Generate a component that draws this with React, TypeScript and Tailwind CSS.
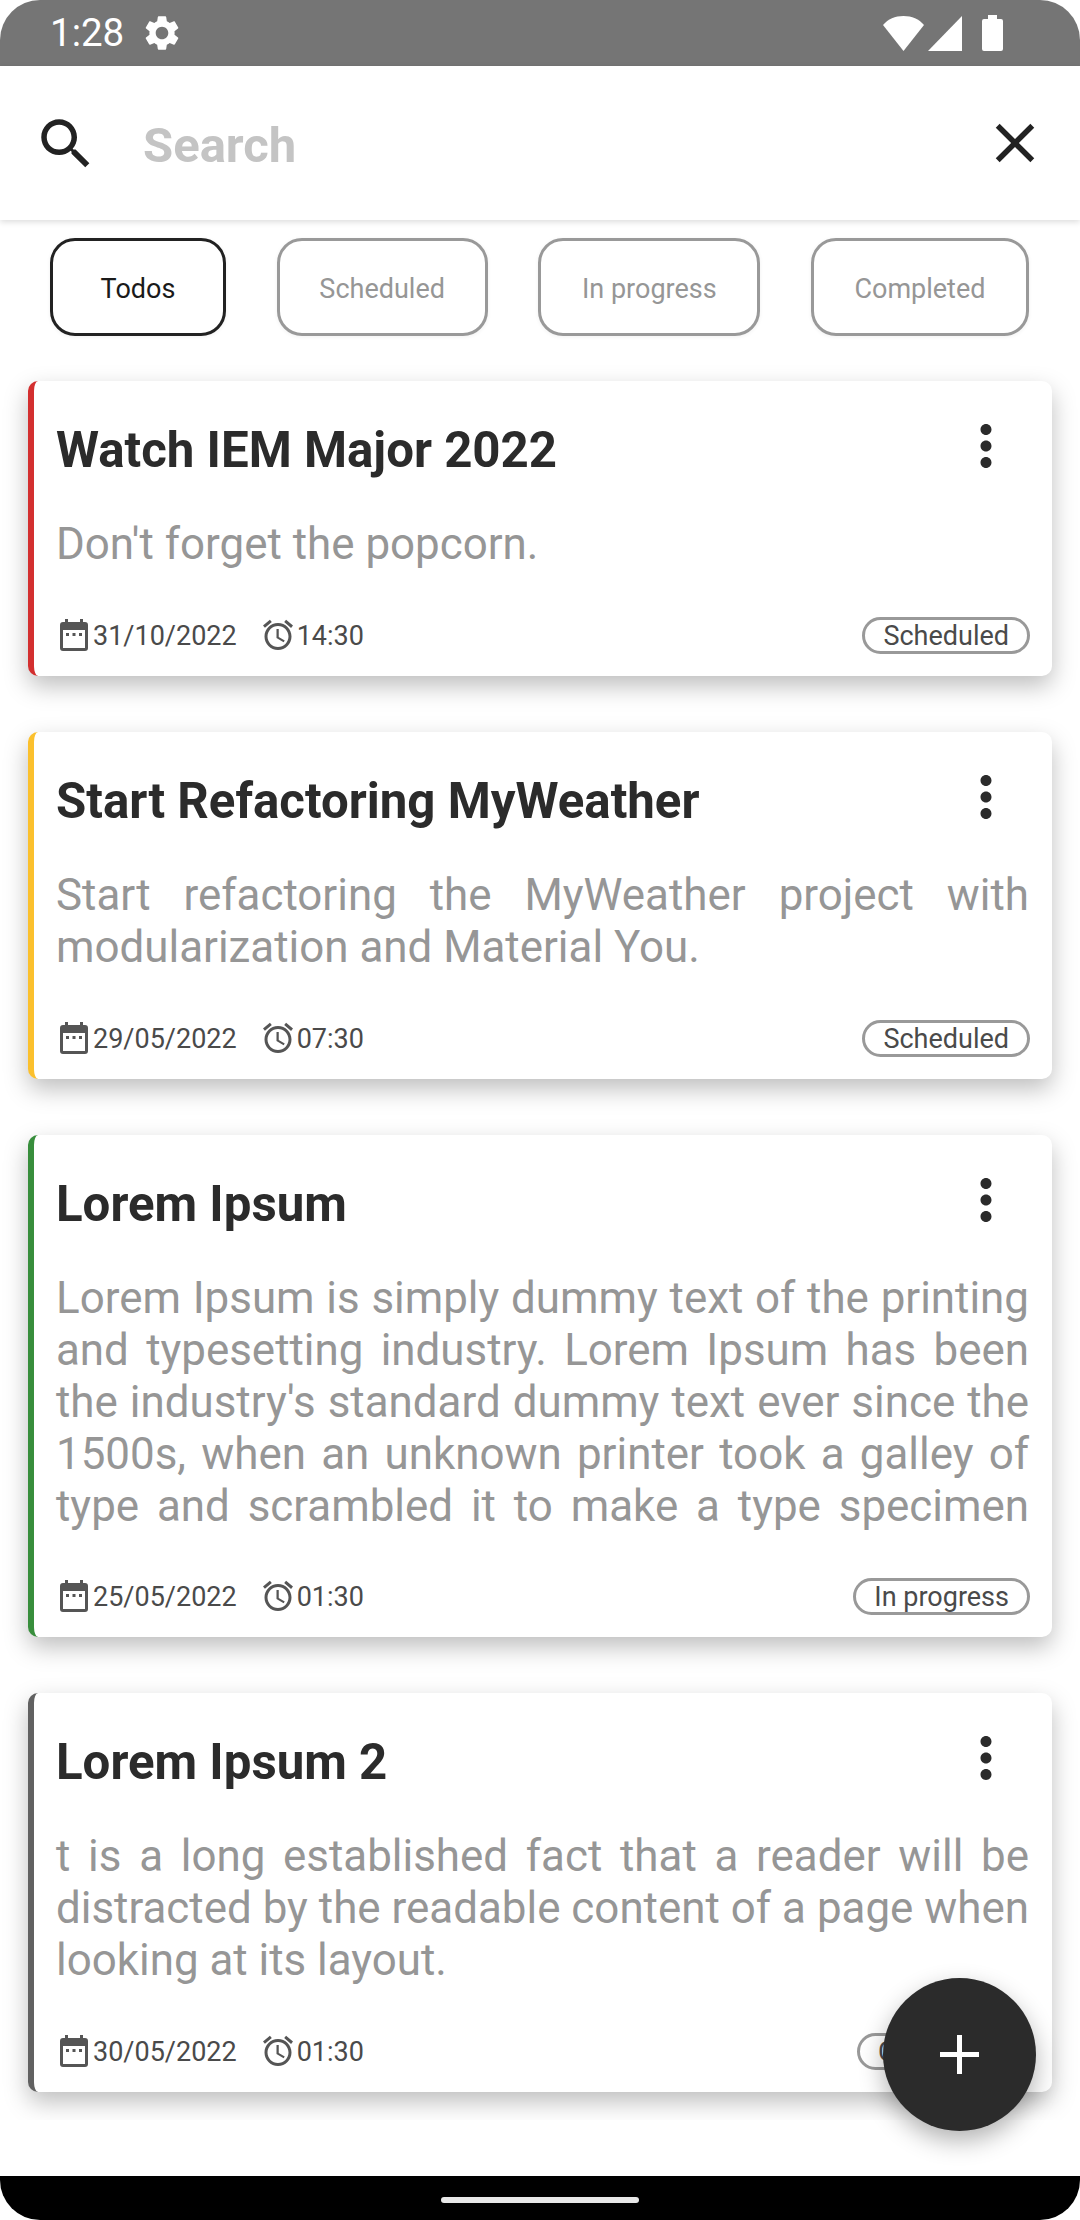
/**
 * Todo list screen
 */

const ICONS = {
  search:
    'M15.5 14h-.79l-.28-.27C15.41 12.59 16 11.11 16 9.5 16 5.91 13.09 3 9.5 3S3 5.91 3 9.5 5.91 16 9.5 16c1.61 0 3.09-.59 4.23-1.57l.27.28v.79l5 4.99L20.49 19l-4.99-5zm-6 0C7.01 14 5 11.99 5 9.5S7.01 5 9.5 5 14 7.01 14 9.5 11.99 14 9.5 14z',
  close:
    'M19 6.41 17.59 5 12 10.59 6.41 5 5 6.41 10.59 12 5 17.59 6.41 19 12 13.41 17.59 19 19 17.59 13.41 12z',
  more:
    'M12 8c1.1 0 2-.9 2-2s-.9-2-2-2-2 .9-2 2 .9 2 2 2zm0 2c-1.1 0-2 .9-2 2s.9 2 2 2 2-.9 2-2-.9-2-2-2zm0 6c-1.1 0-2 .9-2 2s.9 2 2 2 2-.9 2-2-.9-2-2-2z',
  alarm:
    'M22 5.72l-4.6-3.86-1.29 1.53 4.6 3.86L22 5.72zM7.88 3.39L6.6 1.86 2 5.71l1.29 1.53 4.59-3.85zM12.5 8H11v6l4.75 2.85.75-1.23-4-2.37V8zM12 4c-4.97 0-9 4.03-9 9s4.02 9 9 9c4.97 0 9-4.03 9-9s-4.03-9-9-9zm0 16c-3.87 0-7-3.13-7-7s3.13-7 7-7 7 3.13 7 7-3.13 7-7 7z',
  settings:
    'M19.14 12.94c.04-.3.06-.61.06-.94 0-.32-.02-.64-.07-.94l2.03-1.58c.18-.14.23-.41.12-.61l-1.92-3.32c-.12-.22-.37-.29-.59-.22l-2.39.96c-.5-.38-1.03-.7-1.62-.94l-.36-2.54c-.04-.24-.24-.41-.48-.41h-3.84c-.24 0-.43.17-.47.41l-.36 2.54c-.59.24-1.13.57-1.62.94l-2.39-.96c-.22-.08-.47 0-.59.22L2.74 8.87c-.12.21-.08.47.12.61l2.03 1.58c-.05.3-.09.63-.09.94s.02.64.07.94l-2.03 1.58c-.18.14-.23.41-.12.61l1.92 3.32c.12.22.37.29.59.22l2.39-.96c.5.38 1.03.7 1.62.94l.36 2.54c.05.24.24.41.48.41h3.84c.24 0 .44-.17.47-.41l.36-2.54c.59-.24 1.13-.56 1.62-.94l2.39.96c.22.08.47 0 .59-.22l1.92-3.32c.12-.22.07-.47-.12-.61l-2.01-1.58zM12 15.6c-1.98 0-3.6-1.62-3.6-3.6s1.62-3.6 3.6-3.6 3.6 1.62 3.6 3.6-1.62 3.6-3.6 3.6z',
};

function Icon({ d, className }: { d: string; className: string }) {
  return (
    <svg viewBox="0 0 24 24" fill="currentColor" className={className}>
      <path d={d} />
    </svg>
  );
}

function CalendarIcon() {
  return (
    <svg viewBox="0 0 28 32" className="w-[28px] h-[32px] shrink-0 text-[#555555]" fill="currentColor">
      <path d="M5 0h3v3h12V0h3v3h2a3 3 0 0 1 3 3v23a3 3 0 0 1-3 3H3a3 3 0 0 1-3-3V6a3 3 0 0 1 3-3h2zM3 11v18h22V11z" />
      <rect x="6" y="14" width="3" height="3" />
      <rect x="12.5" y="14" width="3" height="3" />
      <rect x="19" y="14" width="3" height="3" />
    </svg>
  );
}

const TABS = [
  { label: 'Todos', width: 'w-[176px]', active: true },
  { label: 'Scheduled', width: 'w-[211px]', active: false },
  { label: 'In progress', width: 'w-[222px]', active: false },
  { label: 'Completed', width: 'w-[218px]', active: false },
];

const TODOS = [
  {
    title: 'Watch IEM Major 2022',
    body: "Don't forget the popcorn.",
    date: '31/10/2022',
    time: '14:30',
    status: 'Scheduled',
    border: 'border-l-[#d32f2f]',
    bodyClass: 'h-[52px]',
  },
  {
    title: 'Start Refactoring MyWeather',
    body: 'Start refactoring the MyWeather project with modularization and Material You.',
    date: '29/05/2022',
    time: '07:30',
    status: 'Scheduled',
    border: 'border-l-[#fbc02d]',
    bodyClass: 'h-[104px]',
  },
  {
    title: 'Lorem Ipsum',
    // cut at five lines in the app, so the last line stays justified
    body: "Lorem Ipsum is simply dummy text of the printing and typesetting industry. Lorem Ipsum has been the industry's standard dummy text ever since the 1500s, when an unknown printer took a galley of type and scrambled it to make a type specimen",
    date: '25/05/2022',
    time: '01:30',
    status: 'In progress',
    border: 'border-l-[#388e3c]',
    bodyClass: 'h-[259px] [text-align-last:justify]',
  },
  {
    title: 'Lorem Ipsum 2',
    body: 't is a long established fact that a reader will be distracted by the readable content of a page when looking at its layout.',
    date: '30/05/2022',
    time: '01:30',
    status: 'Completed',
    border: 'border-l-[#616161]',
    bodyClass: 'h-[156px]',
  },
];

function StatusBar() {
  return (
    <div className="h-[66px] shrink-0 bg-[#757575] flex items-center pl-[50px] pr-[77px] text-white">
      <span className="text-[38.5px] leading-none">1:28</span>
      <Icon d={ICONS.settings} className="w-[42px] h-[42px] ml-[17px]" />
      <div className="ml-auto flex items-center">
        <svg viewBox="0 0 41 35" className="w-[41px] h-[35px]" fill="currentColor">
          <path d="M0 9 C5 3 12 0 20.5 0 S36 3 41 9 L20.5 35 Z" />
        </svg>
        <svg viewBox="0 0 34 35" className="w-[34px] h-[35px] ml-[4px]" fill="currentColor">
          <path d="M34 0V35H0Z" />
        </svg>
        <svg viewBox="0 0 21 36" className="w-[21px] h-[36px] ml-[20px]" fill="currentColor">
          <path d="M6 0h9v4h4a2 2 0 0 1 2 2v28a2 2 0 0 1-2 2H2a2 2 0 0 1-2-2V6a2 2 0 0 1 2-2h4z" />
        </svg>
      </div>
    </div>
  );
}

function SearchBar() {
  return (
    <div className="h-[154px] shrink-0 bg-white flex items-center pl-[33px] pr-[32px] relative z-10 shadow-[0_2px_6px_rgba(0,0,0,0.14)]">
      <Icon d={ICONS.search} className="w-[66px] h-[66px] shrink-0 translate-y-[1px] text-[#222222]" />
      <span className="ml-[44px] pt-[4px] text-[49px] leading-none font-bold text-[#c4c4c4]">Search</span>
      <Icon d={ICONS.close} className="w-[66px] h-[66px] shrink-0 ml-auto text-[#222222]" />
    </div>
  );
}

function TodoCard({ todo }: { todo: (typeof TODOS)[number] }) {
  return (
    <div
      className={`bg-white rounded-[10px] border-l-[6px] ${todo.border} pl-[22px] pr-[23px] pt-[40px] pb-[22px] shadow-[0_10px_24px_rgba(0,0,0,0.26)]`}
    >
      <div className="flex items-center h-[54px]">
        <h2 className="text-[49.2px] leading-[54px] font-bold text-[#2b2b2b] translate-y-[2px]">{todo.title}</h2>
        <Icon d={ICONS.more} className="w-[66px] h-[66px] shrink-0 ml-auto mr-[10px] -translate-y-[2px] text-[#2b2b2b]" />
      </div>
      <p className={`mt-[43px] text-[43.9px] leading-[52px] text-[#969696] text-justify ${todo.bodyClass}`}>
        {todo.body}
      </p>
      <div className="mt-[46px] h-[38px] flex items-center text-[27px] text-[#4a4a4a]">
        <span className="ml-[4px] mr-[5px]">
          <CalendarIcon />
        </span>
        <span className="translate-y-[1px]">{todo.date}</span>
        <Icon d={ICONS.alarm} className="w-[36px] h-[36px] shrink-0 ml-[23px] mr-[1px] text-[#555555]" />
        <span className="translate-y-[1px]">{todo.time}</span>
        <span className="ml-auto -mr-[1px] h-[37px] px-[18px] pt-[2px] rounded-full border-[3px] border-[#999999] flex items-center leading-none">
          {todo.status}
        </span>
      </div>
    </div>
  );
}

export default function App() {
  return (
    <div className="w-[1080px] h-[2220px] relative overflow-hidden flex flex-col bg-white rounded-[40px] font-['Roboto',sans-serif]">
      <StatusBar />
      <SearchBar />

      {/* Filter tabs + list share the clipped scroll area */}
      <div className="h-[1900px] shrink-0 overflow-hidden">
        <div className="flex gap-[50.67px] pl-[50px] pt-[18px]">
          {TABS.map((tab) => (
            <div
              key={tab.label}
              className={`${tab.width} h-[98px] pt-[5px] rounded-[25px] border-[3px] bg-white flex items-center justify-center text-[27px] shadow-[0_1px_4px_rgba(0,0,0,0.06)] ${
                tab.active ? 'border-[#222222] text-[#1a1a1a]' : 'border-[#999999] text-[#969696]'
              }`}
            >
              {tab.label}
            </div>
          ))}
        </div>
        <div className="flex flex-col gap-[56px] px-[28px] pt-[45px]">
          {TODOS.map((todo) => (
            <TodoCard key={todo.title} todo={todo} />
          ))}
        </div>
      </div>

      <div className="flex-1 bg-white" />

      {/* Nav bar */}
      <div className="h-[44px] shrink-0 bg-black flex justify-center pt-[21px]">
        <div className="w-[198px] h-[6px] rounded-full bg-[#e8e8e8]" />
      </div>

      <button
        type="button"
        className="absolute left-[883px] top-[1978px] w-[153px] h-[153px] rounded-full bg-[#2b2b2b] flex items-center justify-center shadow-[0_10px_24px_rgba(0,0,0,0.3)]"
      >
        <svg viewBox="0 0 39 39" className="w-[39px] h-[39px]" fill="white">
          <path d="M17 0h5v17h17v5H22v17h-5V22H0v-5h17z" />
        </svg>
      </button>
    </div>
  );
}
